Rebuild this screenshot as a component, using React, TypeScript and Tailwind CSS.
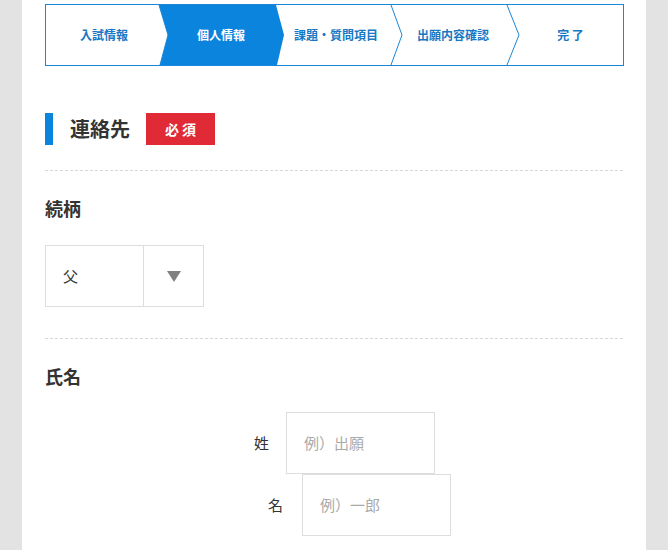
export default function App() {
  const font = { fontFamily: '"Noto Sans CJK JP", "Noto Sans", sans-serif' };
  return (
    <div className="w-[668px] h-[550px] bg-[#e3e3e3] overflow-hidden" style={font}>
      <div className="ml-[22px] w-[624px] h-[550px] bg-white px-[23px] pt-[4px]">
        {/* stepper */}
        <div className="relative h-[62px] w-[579px] border border-[#1a86d8]">
          <svg className="absolute inset-0" width="577" height="60" viewBox="0 0 577 60">
            <polygon points="113,0 230,0 238,30 231,60 114,60 122,30" fill="#0a84dc" />
            <polyline points="345,0 356,30 345,60" fill="none" stroke="#1a86d8" strokeWidth="1" />
            <polyline points="461,0 473,30 461,60" fill="none" stroke="#1a86d8" strokeWidth="1" />
            <polyline points="113,0 122,30 114,60" fill="none" stroke="#1a86d8" strokeWidth="1" />
          </svg>
          <div className="relative flex h-full text-[12px] font-bold text-[#1778c4]">
            <div className="w-[116px] flex items-center justify-center">入試情報</div>
            <div className="w-[118px] flex items-center justify-center text-white">個人情報</div>
            <div className="w-[112px] flex items-center justify-center">課題・質問項目</div>
            <div className="w-[118px] flex items-center justify-center pl-[4px]">出願内容確認</div>
            <div className="flex-1 flex items-center justify-center pl-[8px]">完 了</div>
          </div>
        </div>
        {/* heading */}
        <div className="mt-[47px] flex items-center h-[32px]">
          <div className="w-[8px] h-[32px] bg-[#0a84dc]" />
          <div className="ml-[17px] text-[20px] font-bold text-[#333]">連絡先</div>
          <div className="ml-[16px] w-[69px] h-[32px] bg-[#e02a36] text-white text-[14px] font-bold flex items-center justify-center">必 須</div>
        </div>
        <div className="mt-[25px] border-t border-dashed border-[#d8d8d8]" />
        <div className="mt-[24px] text-[18px] font-bold text-[#333] leading-[26px]">続柄</div>
        <div className="mt-[24px] flex w-[159px] h-[62px] border border-[#ddd]">
          <div className="w-[98px] border-r border-[#ddd] flex items-center pl-[17px] text-[15px] text-[#333]">父</div>
          <div className="flex-1 flex items-center justify-center">
            <svg width="14" height="11" viewBox="0 0 14 11"><polygon points="0,0 14,0 7,11" fill="#808080" /></svg>
          </div>
        </div>
        <div className="mt-[31px] border-t border-dashed border-[#d8d8d8]" />
        <div className="mt-[24px] text-[18px] font-bold text-[#333] leading-[26px]">氏名</div>
        <div className="mt-[23px] flex items-center">
          <div className="ml-[209px] w-[32px] text-[15px] text-[#333]">姓</div>
          <div className="w-[149px] h-[62px] border border-[#ddd] flex items-center pl-[17px] text-[15px] text-[#aaa]">例）出願</div>
        </div>
        <div className="flex items-center">
          <div className="ml-[223px] w-[34px] text-[15px] text-[#333]">名</div>
          <div className="w-[149px] h-[62px] border border-[#ddd] flex items-center pl-[17px] text-[15px] text-[#aaa]">例）一郎</div>
        </div>
      </div>
    </div>
  );
}
